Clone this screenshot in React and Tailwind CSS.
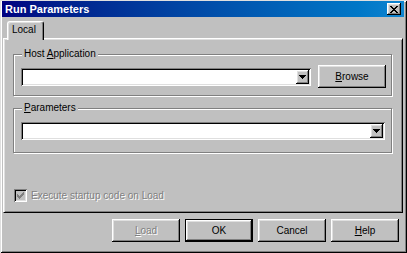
import React from "react";

const RAISED =
  "bg-[#c0c0c0] shadow-[inset_-1px_-1px_0_#000,inset_1px_1px_0_#fff,inset_-2px_-2px_0_#808080,inset_2px_2px_0_#dfdfdf]";
const SUNKEN =
  "shadow-[inset_1px_1px_0_#808080,inset_-1px_-1px_0_#fff,inset_2px_2px_0_#000,inset_-2px_-2px_0_#dfdfdf]";

function CloseGlyph() {
  const px = [
    [0, 0, 2], [6, 0, 2],
    [1, 1, 2], [5, 1, 2],
    [2, 2, 4],
    [3, 3, 2],
    [2, 4, 4],
    [1, 5, 2], [5, 5, 2],
    [0, 6, 2], [6, 6, 2],
  ];
  return (
    <svg width="8" height="7" viewBox="0 0 8 7" shapeRendering="crispEdges">
      {px.map(([x, y, w], i) => (
        <rect key={i} x={x} y={y} width={w} height="1" fill="#000" />
      ))}
    </svg>
  );
}

function CheckGlyph() {
  const px = [
    [6, 0, 1],
    [5, 1, 2],
    [0, 2, 1], [4, 2, 3],
    [0, 3, 2], [3, 3, 3],
    [0, 4, 5],
    [1, 5, 3],
    [2, 6, 1],
  ];
  return (
    <svg width="7" height="7" viewBox="0 0 7 7" shapeRendering="crispEdges">
      {px.map(([x, y, w], i) => (
        <rect key={i} x={x} y={y} width={w} height="1" fill="#808080" />
      ))}
    </svg>
  );
}

function Arrow() {
  return (
    <svg width="7" height="4" viewBox="0 0 7 4" shapeRendering="crispEdges">
      <rect x="0" y="0" width="7" height="1" fill="#000" />
      <rect x="1" y="1" width="5" height="1" fill="#000" />
      <rect x="2" y="2" width="3" height="1" fill="#000" />
      <rect x="3" y="3" width="1" height="1" fill="#000" />
    </svg>
  );
}

function Combo({ width }) {
  return (
    <div className={`${width} h-[18px] bg-white flex justify-end p-[2px] ${SUNKEN}`}>
      <div className={`w-[13px] h-[14px] flex items-center justify-center ${RAISED}`}>
        <Arrow />
      </div>
    </div>
  );
}

export default function App() {
  return (
    <div className="w-[407px] h-[253px] bg-[#c0c0c0] flex flex-col pl-[2px] pr-[3px] pt-[1px] font-['Liberation_Sans',Arial,sans-serif] text-[10px] leading-[12px] text-black overflow-hidden shadow-[inset_1px_1px_0_#dfdfdf,inset_-1px_-1px_0_#000,inset_2px_2px_0_#fff,inset_-2px_-2px_0_#808080]">
      {/* Title bar */}
      <div className="h-[16px] flex items-center justify-between bg-gradient-to-r from-[#000080] to-[#1084d0] pl-[3px] pr-[3px]">
        <span className="text-white font-bold text-[11px] leading-none">Run Parameters</span>
        <div className={`w-[14px] h-[12px] flex items-center justify-center ${RAISED}`}>
          <CloseGlyph />
        </div>
      </div>

      <div className="mt-[4px] ml-[1px] mr-[1px] flex flex-col">
        {/* Tabs */}
        <div className="flex pl-[4px] h-[17px] relative z-10">
          <div className="w-[37px] h-[19px] bg-[#c0c0c0] border-t border-l border-white border-r border-r-black rounded-t-[3px] shadow-[inset_-1px_0_0_#808080,inset_1px_1px_0_#dfdfdf] pl-[4px] pt-[2px]">
            Local
          </div>
        </div>

        {/* Panel */}
        <div className="h-[175px] bg-[#c0c0c0] border border-white border-r-black border-b-black shadow-[inset_1px_1px_0_#dfdfdf,inset_-1px_-1px_0_#808080] pt-[15px] pl-[9px] pr-[10px] flex flex-col">
          <div className="relative h-[42px] border border-[#808080] shadow-[1px_1px_0_#fff,inset_1px_1px_0_#fff] flex items-center pt-[3px] pl-[7px]">
            <span className="absolute left-[8px] -top-[7px] px-[2px] bg-[#c0c0c0]">
              Host <u>A</u>pplication
            </span>
            <Combo width="w-[290px]" />
            <div className={`ml-[7px] w-[68px] h-[23px] flex items-center justify-center ${RAISED}`}>
              <span><u>B</u>rowse</span>
            </div>
          </div>

          <div className="relative mt-[12px] h-[45px] border border-[#808080] shadow-[1px_1px_0_#fff,inset_1px_1px_0_#fff] pt-[13px] pl-[7px]">
            <span className="absolute left-[8px] -top-[7px] px-[2px] bg-[#c0c0c0]">
              <u>P</u>arameters
            </span>
            <Combo width="w-[364px]" />
          </div>

          <div className="mt-[36px] ml-[1px] flex items-center gap-[4px]">
            <div className={`w-[13px] h-[13px] bg-[#c0c0c0] flex items-center justify-center ${SUNKEN}`}>
              <CheckGlyph />
            </div>
            <span className="text-[#808080] [text-shadow:1px_1px_0_#fff]">
              Execute startup code on Load
            </span>
          </div>
        </div>

        {/* Buttons */}
        <div className="mt-[6px] flex justify-end gap-[5px] pr-[4px]">
          <div className={`w-[68px] h-[23px] flex items-center justify-center ${RAISED}`}>
            <span className="text-[#808080] [text-shadow:1px_1px_0_#fff]"><u>L</u>oad</span>
          </div>
          <div className="w-[68px] h-[23px] border border-black bg-[#c0c0c0] flex items-center justify-center shadow-[inset_-1px_-1px_0_#000,inset_1px_1px_0_#fff,inset_-2px_-2px_0_#808080,inset_2px_2px_0_#dfdfdf]">
            <span>OK</span>
          </div>
          <div className={`w-[68px] h-[23px] flex items-center justify-center ${RAISED}`}>
            <span>Cancel</span>
          </div>
          <div className={`w-[68px] h-[23px] flex items-center justify-center ${RAISED}`}>
            <span><u>H</u>elp</span>
          </div>
        </div>
      </div>
    </div>
  );
}
